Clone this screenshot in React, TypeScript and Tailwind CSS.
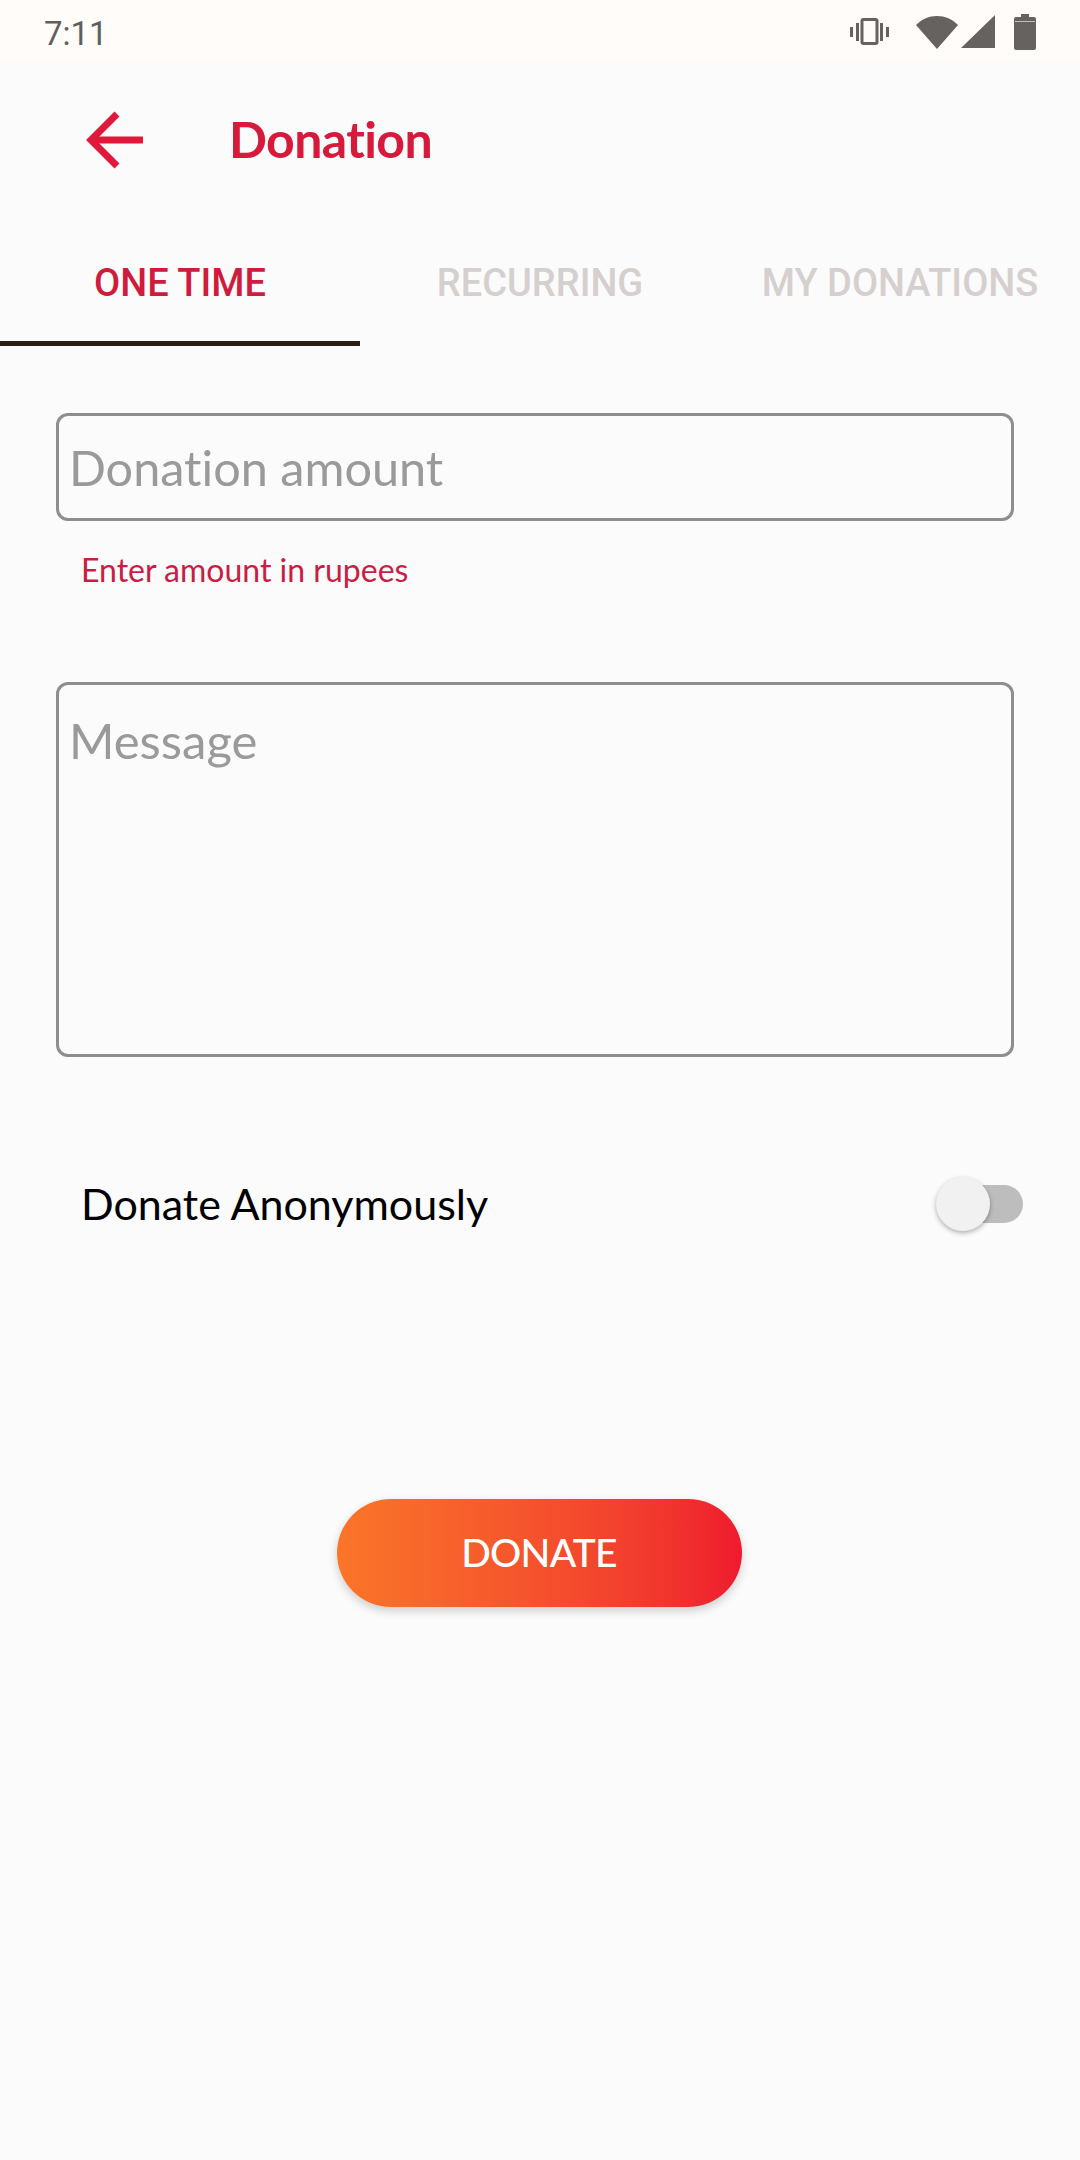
const tabs = ["ONE TIME", "RECURRING", "MY DONATIONS"]

function StatusIcons() {
  return (
    <div className="flex items-center text-[#666260] pt-[3px]">
      <svg width="40" height="30" viewBox="0 0 40 30" fill="none" className="mr-[26px]">
        <rect x="12" y="2.5" width="15" height="24" rx="1.5" stroke="currentColor" strokeWidth="3" />
        <rect x="0" y="10" width="3" height="10" fill="currentColor" />
        <rect x="6" y="6" width="3" height="18" fill="currentColor" />
        <rect x="30" y="6" width="3" height="18" fill="currentColor" />
        <rect x="36" y="10" width="3" height="10" fill="currentColor" />
      </svg>
      <svg width="42" height="34" viewBox="0 0 42 34" className="mr-[3px]">
        <path d="M0 10C6 4 13 1 21 1s15 3 21 9L21 34z" fill="currentColor" />
      </svg>
      <svg width="34" height="34" viewBox="0 0 34 34" className="mr-[19px]">
        <path d="M0 33L34 0v33z" fill="currentColor" />
      </svg>
      <svg width="22" height="36" viewBox="0 0 22 36">
        <path d="M7 0h8v3h5a2 2 0 0 1 2 2v29a2 2 0 0 1-2 2H2a2 2 0 0 1-2-2V5a2 2 0 0 1 2-2h5z" fill="currentColor" />
        <rect x="1" y="7" width="20" height="1" fill="#fff" opacity="0.6" />
      </svg>
    </div>
  )
}

export default function App() {
  return (
    <div className="w-[1080px] h-[2160px] bg-[#fbfbfb] font-['Lato',sans-serif] [font-variant-ligatures:none] overflow-hidden">
      {/* status bar */}
      <div className="h-[60px] bg-[#fffcf9] flex items-center justify-between pl-[44px] pr-[44px]">
        <span className="font-['Roboto',sans-serif] text-[33px] leading-none text-[#5f5f5f] pt-[6px]">7:11</span>
        <StatusIcons />
      </div>

      {/* header */}
      <div className="h-[160px] flex items-center pl-[86px]">
        <svg width="58" height="58" viewBox="0 0 58 58" fill="none" stroke="#e0183c" strokeWidth="7" className="shrink-0">
          <path d="M57 29H6" />
          <path d="M31 3L5 29l26 26" />
        </svg>
        <span className="ml-[85px] pb-[2px] text-[#d61a3c] text-[50px] leading-none font-bold tracking-[-0.6px]">Donation</span>
      </div>

      {/* tabs */}
      <div className="flex h-[127px]">
        {tabs.map((t, i) => (
          <div key={t} className="w-[360px] relative flex justify-center pt-[41px]">
            <span className={"font-['Roboto',sans-serif] font-medium text-[38px] leading-[44px] whitespace-nowrap " + (i === 0 ? "text-[#cf1c3d]" : "text-[#d5d0ce]")}>{t}</span>
            {i === 0 && <div className="absolute left-0 top-[121px] w-[360px] h-[5px] bg-[#2b1d16]" />}
          </div>
        ))}
      </div>

      {/* form */}
      <div className="pl-[56px] pt-[66px]">
        <div className="w-[958px] h-[108px] border-[3px] border-[#8e8e8e] rounded-[12px] flex items-center pl-[10px]">
          <span className="text-[48.6px] leading-none text-[#9a9a9a]">Donation amount</span>
        </div>
        <p className="ml-[25px] mt-[29px] text-[32px] leading-[40px] text-[#c81e45]">Enter amount in rupees</p>
        <div className="mt-[92px] w-[958px] h-[375px] border-[3px] border-[#8e8e8e] rounded-[12px] pl-[10px] pt-[31px]">
          <span className="block text-[49px] leading-none text-[#9a9a9a]">Message</span>
        </div>
        <div className="mt-[116px] flex items-center justify-between w-[967px] pl-[25px] h-[60px]">
          <span className="text-[43px] leading-none text-black">Donate Anonymously</span>
          <div className="relative w-[73px] h-[38px] mt-[2px] rounded-full bg-[#bdbdbd]">
            <div className="absolute left-[-14px] top-[-8px] w-[54px] h-[54px] rounded-full bg-[#f1f1f1] shadow-[0_2px_5px_rgba(0,0,0,0.3)]" />
          </div>
        </div>
      </div>

      {/* donate */}
      <div className="flex justify-center mt-[266px] pr-[2px]">
        <div className="w-[405px] h-[108px] rounded-full bg-gradient-to-r from-[#fa7529] to-[#ee1a2e] shadow-[0_4px_10px_rgba(0,0,0,0.18)] flex items-center justify-center">
          <span className="text-white text-[39px] leading-none font-medium tracking-[-0.8px] pb-[2px]">DONATE</span>
        </div>
      </div>
    </div>
  )
}
